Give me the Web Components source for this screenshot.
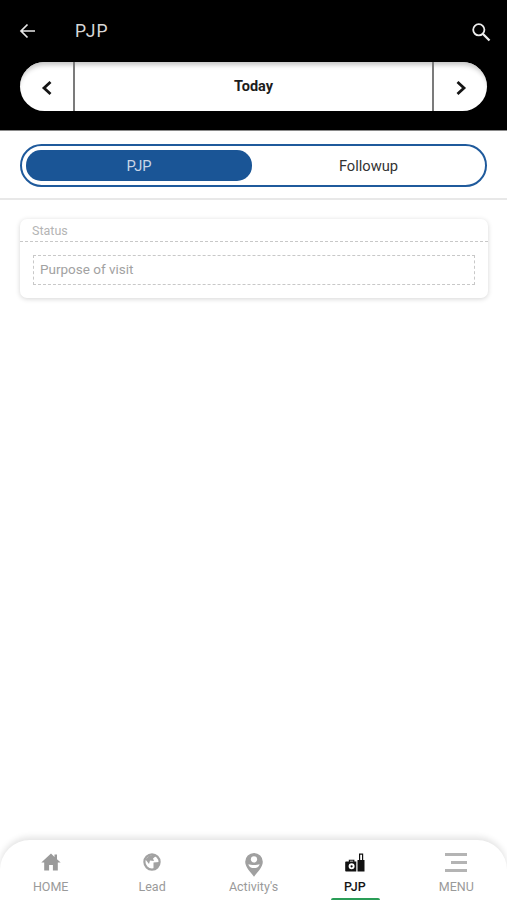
<!DOCTYPE html>
<html><head><meta charset="utf-8">
<style>
html,body{margin:0;padding:0;background:#fff;height:100%}
body{width:507px;height:900px;overflow:hidden;font-family:Roboto,"Liberation Sans",sans-serif;display:flex;flex-direction:column}
</style></head><body>
<app-header>
  <span slot="title">PJP</span>
  <span slot="date">Today</span>
</app-header>
<seg-tabs><span slot="a">PJP</span><span slot="b">Followup</span></seg-tabs>
<main-area>
  <visit-card><span slot="status">Status</span><span slot="purpose">Purpose of visit</span></visit-card>
</main-area>
<bottom-nav>
  <nav-item label="HOME" icon="home"></nav-item>
  <nav-item label="Lead" icon="globe"></nav-item>
  <nav-item label="Activity's" icon="pin"></nav-item>
  <nav-item label="PJP" icon="bags" active></nav-item>
  <nav-item label="MENU" icon="menu"></nav-item>
</bottom-nav>
<script>
function def(name,html){
  customElements.define(name,class extends HTMLElement{
    constructor(){super();this.attachShadow({mode:'open'}).innerHTML=html;}
  });
}
def('app-header',`<style>
:host{display:block;background:#000;height:131px;box-sizing:border-box;flex:none;border-bottom:1px solid #8a8a8a;padding:0 20px}
.top{height:62px;display:flex;align-items:center;color:#d8d8d8}
.title{margin-left:38px;font-size:17.5px;font-weight:400;letter-spacing:1.3px;flex:1}
svg{display:block}
.back{margin-left:-1px}
.search{margin-right:-4px;position:relative;top:1px}
.pill{height:49px;border-radius:25px;background:#fff;display:flex;align-items:stretch;box-shadow:inset 0 6px 5px -3px #c4c4c4;overflow:hidden}
.end{width:53px;display:flex;align-items:center;justify-content:center;flex:none}
.mid{flex:1;display:flex;align-items:center;justify-content:center;border-left:2px solid #7b7b7b;border-right:2px solid #7b7b7b;font-weight:700;font-size:14.5px;color:#1c1c1c}
</style>
<div class="top">
<svg class="back" width="18" height="18" viewBox="0 0 18 18" fill="none" stroke="#e8e8e8" stroke-width="1.7"><path d="M16 9H2.500M8.500 2.500 2 9l6.500 6.500"/></svg>
<div class="title"><slot name="title"></slot></div>
<svg class="search" width="20" height="20" viewBox="0 0 20 20" fill="none" stroke="#eee" stroke-width="1.800"><circle cx="7.800" cy="7.800" r="5.600"/><path d="M12 12l6.500 6.500" stroke-width="2.300"/></svg>
</div>
<div class="pill">
<div class="end"><svg width="14" height="16" viewBox="0 0 14 16" fill="none" stroke="#151515" stroke-width="2.800" style="position:relative;top:1px"><path d="M10.500 2 4 8l6.500 6"/></svg></div>
<div class="mid"><slot name="date"></slot></div>
<div class="end"><svg width="14" height="16" viewBox="0 0 14 16" fill="none" stroke="#151515" stroke-width="2.800" style="position:relative;top:1px"><path d="M3.500 2 10 8l-6.500 6"/></svg></div>
</div>`);
def('seg-tabs',`<style>
:host{display:block;flex:none;height:69px;box-sizing:border-box;padding:13px 20px 0;border-bottom:2px solid #e8e8e8;background:#fff}
.o{height:43px;box-sizing:border-box;border:2px solid #1f5a9c;border-radius:22px;padding:4px;display:flex;font-size:14.7px}
.a,.b{display:flex;align-items:center;justify-content:center}
.a{width:226px;background:#1a5596;color:#c9d6e6;border-radius:15px}
.b{flex:1;color:#333;padding-left:4px}
</style><div class="o"><div class="a"><slot name="a"></slot></div><div class="b"><slot name="b"></slot></div></div>`);
def('main-area',`<style>:host{display:block;flex:1;padding:19px 19px 0 20px;background:#fff}</style><slot></slot>`);
def('visit-card',`<style>
:host{display:block;height:79px;box-sizing:border-box;border-radius:7px;background:#fff;box-shadow:0 1px 5px rgba(0,0,0,.17)}
.s{height:23px;box-sizing:border-box;border-bottom:1px dashed #c8c8c8;padding:4px 0 0 12px;font-size:12.500px;line-height:15px;color:#b4b4b4}
.p{margin:13px 13px 0 13px;height:30px;box-sizing:border-box;border:1px dashed #c8c8c8;padding:0 0 2px 6px;display:flex;align-items:center;font-size:13.500px;color:#a2a2a2}
</style><div class="s"><slot name="status"></slot></div><div class="p"><slot name="purpose"></slot></div>`);
def('bottom-nav',`<style>
:host{display:flex;flex:none;height:60px;box-sizing:border-box;background:#fff;border-radius:30px 30px 0 0;box-shadow:0 -3px 6px rgba(0,0,0,.11);position:relative}
</style><slot></slot>`);
const icons={
home:`<svg width="20" height="18" viewBox="0 0 20 18"><path fill="#9a9a9a" d="M10 .500 .300 9.500h2.900V17.500h4.900v-5.500h3.800v5.500h4.900V9.500h2.900L16 6.200V1.500h-2.500v2.400z"/></svg>`,
globe:`<svg width="20" height="20" viewBox="0 0 20 20"><circle cx="10" cy="10" r="7.600" fill="none" stroke="#a2a2a2" stroke-width="2.200"/><path fill="#a2a2a2" d="M3.500 7.500 7 4l5-1.500 2 1.500-3 2.500 1 2.500-4-.5-1 3.500zM11.500 10.500l5.500-.5.500 2.500-4 4.500-2 .5v-3.500z"/></svg>`,
pin:`<svg width="18" height="24" viewBox="0 0 18 24" style="position:relative;top:3px"><path fill="#a0a0a0" d="M9 0a8.800 8.800 0 0 1 8.800 8.800c0 5.500-5.600 10.500-8.800 15C5.800 19.300.2 14.300.2 8.800A8.800 8.800 0 0 1 9 0z"/><circle cx="9" cy="6.300" r="3.100" fill="#fff"/><path fill="#fff" d="M3.300 11.200c2.500 1 8.900 1 11.400 0-.6 2.700-3 3.900-5.700 3.900s-5.100-1.200-5.700-3.900z"/></svg>`,
bags:`<svg width="20" height="19" viewBox="0 0 20 19"><path fill="#111" d="M12.500 7h1.500V.500h4.200V7h1.300v11.500h-7zM15.200 1.700V7h1.800V1.700z"/><path fill-rule="evenodd" fill="#111" d="M3.800 8.500V6.800h5.600v1.700h1.900v10H1q-.8 0-.8-.8V9.300q0-.8.800-.8zM5 8.500h3.200v-.7H5zM6.600 10.300a3 3 0 1 0 0 6 3 3 0 0 0 0-6z"/><circle cx="6.600" cy="13.300" r="1.100" fill="#111"/></svg>`,
menu:`<svg width="22" height="19" viewBox="0 0 22 19"><path fill="#b4b4b4" d="M0 0h22v3H0zM6 8h16v3H6zM0 16h22v3H0z"/></svg>`
};
customElements.define('nav-item',class extends HTMLElement{
  constructor(){super();this.attachShadow({mode:'open'});}
  connectedCallback(){
    const a=this.hasAttribute('active');
    this.shadowRoot.innerHTML=`<style>
:host{display:block;flex:1;position:relative}
.i{height:26px;margin-top:9px;display:flex;align-items:center;justify-content:center}
.l{text-align:center;font-size:12.500px;line-height:15px;margin-top:4px;color:${a?'#151515':'#9a9a9a'};font-weight:${a?'500':'400'}}
.bar{position:absolute;left:50%;bottom:0;width:49px;margin-left:-24px;height:2.500px;background:#2a9d57;border-radius:3px 3px 0 0}
</style><div class="i">${icons[this.getAttribute('icon')]}</div><div class="l">${this.getAttribute('label')}</div>${a?'<div class="bar"></div>':''}`;
  }
});
</script>
</body></html>
